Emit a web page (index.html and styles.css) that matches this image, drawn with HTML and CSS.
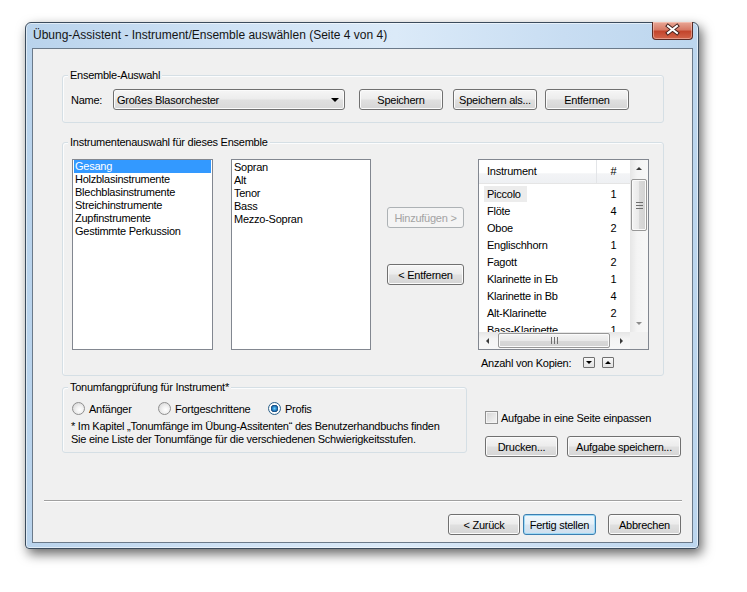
FILE: index.html
```html
<!DOCTYPE html>
<html lang="de">

<head>
    <meta charset="UTF-8">
    <meta name="viewport" content="width=device-width, initial-scale=1.0">
    <title>Übung-Assistent</title>
    <link rel="stylesheet" href="styles.css">
</head>

<body>

    <div class="window">
        <div class="titlebar">
            <span class="title">Übung-Assistent - Instrument/Ensemble auswählen (Seite 4 von 4)</span>
            <div class="close">
                <svg width="41" height="18" viewBox="0 0 41 18">
                    <path d="M16 5 L25 12 M25 5 L16 12" stroke="#43201c" stroke-width="4" stroke-linecap="square" fill="none" />
                    <path d="M16 5 L25 12 M25 5 L16 12" stroke="#ffffff" stroke-width="2" stroke-linecap="square" fill="none" />
                </svg>
            </div>
        </div>

        <div class="client">
            <div class="content">
                <!-- Ensemble -->
                <div class="group group-ensemble">
                    <span class="group-title">Ensemble-Auswahl</span>
                    <div class="ens-row">
                        <span class="name-label">Name:</span>
                        <div class="combo">
                            <span>Großes Blasorchester</span>
                            <i class="tri-down"></i>
                        </div>
                        <button class="btn btn-ens">Speichern</button>
                        <button class="btn btn-ens">Speichern als...</button>
                        <button class="btn btn-ens">Entfernen</button>
                    </div>
                </div>

                <!-- Instruments -->
                <div class="group group-instr">
                    <span class="group-title">Instrumentenauswahl für dieses Ensemble</span>
                    <div class="instr-row">
                        <ul class="listbox lb-families">
                            <li class="selected">Gesang</li>
                            <li>Holzblasinstrumente</li>
                            <li>Blechblasinstrumente</li>
                            <li>Streichinstrumente</li>
                            <li>Zupfinstrumente</li>
                            <li>Gestimmte Perkussion</li>
                        </ul>
                        <ul class="listbox lb-instruments">
                            <li>Sopran</li>
                            <li>Alt</li>
                            <li>Tenor</li>
                            <li>Bass</li>
                            <li>Mezzo-Sopran</li>
                        </ul>
                        <div class="move-col">
                            <button class="btn btn-move" disabled>Hinzufügen &gt;</button>
                            <button class="btn btn-move btn-remove">&lt; Entfernen</button>
                        </div>
                        <div class="lv-col">
                            <div class="listview">
                                <div class="lv-main">
                                    <div class="lv-header">
                                        <span class="col-name">Instrument</span>
                                        <span class="col-count">#</span>
                                    </div>
                                    <div class="lv-row"><span class="col-name"><span class="focus">Piccolo</span></span><span class="col-count">1</span></div>
                                    <div class="lv-row"><span class="col-name">Flöte</span><span class="col-count">4</span></div>
                                    <div class="lv-row"><span class="col-name">Oboe</span><span class="col-count">2</span></div>
                                    <div class="lv-row"><span class="col-name">Englischhorn</span><span class="col-count">1</span></div>
                                    <div class="lv-row"><span class="col-name">Fagott</span><span class="col-count">2</span></div>
                                    <div class="lv-row"><span class="col-name">Klarinette in Eb</span><span class="col-count">1</span></div>
                                    <div class="lv-row"><span class="col-name">Klarinette in Bb</span><span class="col-count">4</span></div>
                                    <div class="lv-row"><span class="col-name">Alt-Klarinette</span><span class="col-count">2</span></div>
                                    <div class="lv-row lv-partial"><span class="col-name">Bass-Klarinette</span><span class="col-count">1</span></div>
                                </div>
                                <div class="vscroll">
                                    <div class="sb-arrow"><i class="tri-up small"></i></div>
                                    <div class="vthumb"><i class="grip-h"></i></div>
                                    <div class="sb-track"></div>
                                    <div class="sb-arrow"><i class="tri-down small light"></i></div>
                                </div>
                                <div class="hscroll">
                                    <div class="sb-arrow"><i class="tri-left"></i></div>
                                    <div class="hthumb"><i class="grip-v"></i></div>
                                    <div class="sb-track"></div>
                                    <div class="sb-arrow"><i class="tri-right"></i></div>
                                </div>
                                <div class="corner"></div>
                            </div>
                            <div class="copies">
                                <span class="copies-label">Anzahl von Kopien:</span>
                                <span class="spin"><i class="tri-down tiny"></i></span>
                                <span class="spin"><i class="tri-up tiny"></i></span>
                            </div>
                        </div>
                    </div>
                </div>

                <!-- Range check + print -->
                <div class="lower">
                    <div class="group group-range">
                        <span class="group-title">Tonumfangprüfung für Instrument*</span>
                        <div class="radio-row">
                            <label class="option opt-1"><span class="radio"></span>Anfänger</label>
                            <label class="option opt-2"><span class="radio"></span>Fortgeschrittene</label>
                            <label class="option"><span class="radio checked"></span>Profis</label>
                        </div>
                        <p class="footnote">* Im Kapitel „Tonumfänge im Übung-Assitenten“ des Benutzerhandbuchs finden<br>Sie eine Liste der Tonumfänge für die verschiedenen Schwierigkeitsstufen.</p>
                    </div>
                    <div class="print-col">
                        <label class="check-row"><span class="checkbox"></span>Aufgabe in eine Seite einpassen</label>
                        <div class="print-buttons">
                            <button class="btn btn-print">Drucken...</button>
                            <button class="btn btn-store">Aufgabe speichern...</button>
                        </div>
                    </div>
                </div>
            </div>

            <div class="separator"></div>

            <div class="nav">
                <button class="btn btn-back">&lt; Zurück</button>
                <button class="btn btn-finish default">Fertig stellen</button>
                <button class="btn btn-cancel">Abbrechen</button>
            </div>
        </div>
    </div>

</body>

</html>
```

FILE: styles.css
```css
/* Vista style wizard dialog */
body {
    margin: 0;
    width: 747px;
    height: 592px;
    overflow: hidden;
    background-color: #ffffff;
    font-family: "Liberation Sans", Arial, sans-serif;
    font-size: 11px;
    letter-spacing: -0.25px;
    color: #000;
}

/* window frame */
.window {
    margin: 22px 0 0 25px;
    width: 674px;
    height: 527px;
    box-sizing: border-box;
    border: 1px solid #3b4b5c;
    border-radius: 6px 6px 4px 4px;
    background: linear-gradient(to right, #b9d3ec 0%, #cfe2f5 30%, #dbeaf8 55%, #c8ddf2 80%, #bcd6ee 100%);
    box-shadow: 3px 5px 12px rgba(0, 0, 0, 0.6), inset 0 0 0 1px rgba(255, 255, 255, 0.55);
    display: flex;
    flex-direction: column;
}

.titlebar {
    height: 25px;
    display: flex;
    align-items: flex-start;
    justify-content: space-between;
    padding-left: 7px;
}

.title {
    padding-top: 5px;
    line-height: 15px;
    font-size: 12px;
    letter-spacing: 0;
    color: #141414;
}

.close {
    width: 41px;
    height: 18px;
    margin: -1px 5px 0 0;
    box-sizing: border-box;
    border: 1px solid #5a2a24;
    border-top: none;
    border-radius: 0 0 4px 4px;
    background: linear-gradient(#e8a796 0%, #d77a66 45%, #c3452c 55%, #d2644a 100%);
    box-shadow: inset 0 0 0 1px rgba(255, 220, 210, 0.45);
}

.close svg {
    display: block;
    margin: -1px 0 0 -1px;
}

.client {
    flex: 1;
    margin: 0 5px 5px 6px;
    border: 1px solid #6b7a8a;
    background-color: #f0f0f0;
    display: flex;
    flex-direction: column;
}

.content {
    padding: 26px 0 0 29px;
}

/* group boxes */
.group {
    position: relative;
    box-sizing: border-box;
    border: 1px solid #d5dfe5;
    border-radius: 3px;
    box-shadow: inset 1px 1px 0 #fbfcfd;
}

.group-title {
    position: absolute;
    top: -7px;
    left: 5px;
    padding: 0 2px;
    line-height: 13px;
    background-color: #f0f0f0;
}

.group-ensemble {
    width: 602px;
    height: 48px;
    padding: 13px 0 0 8px;
}

.ens-row {
    display: flex;
    align-items: center;
    height: 21px;
}

.name-label {
    width: 42px;
}

.combo {
    width: 232px;
    height: 21px;
    margin-right: 14px;
    box-sizing: border-box;
    border: 1px solid #707070;
    border-radius: 3px;
    background: linear-gradient(#f6f6f6 0%, #ececec 48%, #e0e0e0 52%, #d8d8d8 100%);
    box-shadow: inset 0 0 0 1px #fbfbfb;
    display: flex;
    align-items: center;
    justify-content: space-between;
    padding: 0 5px 0 3px;
}

/* buttons */
.btn {
    box-sizing: border-box;
    height: 21px;
    padding: 0;
    border: 1px solid #707070;
    border-radius: 3px;
    background: linear-gradient(#f6f6f6 0%, #ececec 48%, #e0e0e0 52%, #d5d5d5 100%);
    box-shadow: inset 0 0 0 1px #fbfbfb;
    font-family: "Liberation Sans", Arial, sans-serif;
    font-size: 11px;
    letter-spacing: -0.25px;
    color: #000;
}

.btn:disabled {
    border-color: #adb2b5;
    background: #f4f4f4;
    box-shadow: none;
    color: #a3a3a3;
}

.btn.default {
    border-color: #3c7fb1;
    background: linear-gradient(#f2f8fc 0%, #e6f0f8 48%, #d8e6f2 52%, #cfdfee 100%);
    box-shadow: inset 0 0 0 1px #9fdaf6;
}

.btn-ens {
    width: 84px;
    margin-right: 10px;
}

.btn-ens:last-child {
    margin-left: -2px;
}

/* instrument selection */
.group-instr {
    width: 602px;
    height: 234px;
    margin-top: 19px;
    padding: 16px 0 0 9px;
}

.instr-row {
    display: flex;
    align-items: flex-start;
}

.listbox {
    list-style-type: none;
    margin: 0;
    padding: 0;
    height: 191px;
    box-sizing: border-box;
    border: 1px solid #828790;
    background-color: #fff;
}

.listbox li {
    line-height: 13px;
    padding-left: 2px;
    white-space: nowrap;
}

.listbox li:first-child {
    margin-top: 1px;
}

.listbox li.selected {
    margin: 0 1px;
    padding-left: 1px;
    background-color: #3399ff;
    color: #fff;
}

.lb-families {
    width: 141px;
    margin-right: 18px;
}

.lb-instruments {
    width: 140px;
    margin-right: 16px;
}

.move-col {
    width: 77px;
    margin-right: 14px;
    padding-top: 48px;
    display: flex;
    flex-direction: column;
}

.btn-remove {
    margin-top: 36px;
}

.lv-col {
    width: 171px;
}

.listview {
    height: 191px;
    box-sizing: border-box;
    border: 1px solid #828790;
    background-color: #fff;
    display: grid;
    grid-template-columns: 151px 18px;
    grid-template-rows: 172px 17px;
}

.lv-main {
    overflow: hidden;
}

.lv-header {
    display: flex;
    height: 24px;
    box-sizing: border-box;
    border-bottom: 1px solid #e5e5e5;
    background: linear-gradient(#ffffff 0%, #ffffff 55%, #f3f4f6 60%, #eef0f3 100%);
    line-height: 23px;
}

.lv-header .col-name {
    width: 118px;
    box-sizing: border-box;
    padding-left: 8px;
    border-right: 1px solid #e3e5e8;
}

.lv-header .col-count {
    width: 33px;
    text-align: center;
}

.lv-row {
    display: flex;
    height: 17px;
    line-height: 17px;
}

.lv-row:nth-child(2) {
    margin-top: 2px;
}

.lv-partial {
    height: 12px;
    overflow: hidden;
}

.lv-row .col-name {
    width: 118px;
    box-sizing: border-box;
    padding-left: 8px;
    white-space: nowrap;
}

.lv-row .col-count {
    width: 33px;
    text-align: center;
}

.focus {
    display: inline-block;
    margin-left: -3px;
    padding: 0 6px 0 3px;
    line-height: 16px;
    background-color: #ececec;
}

/* scrollbars */
.vscroll {
    display: flex;
    flex-direction: column;
    background: linear-gradient(to right, #e6e6e6, #f4f4f4 40%, #f7f7f7);
}

.hscroll {
    display: flex;
    background: linear-gradient(#e6e6e6, #f4f4f4 40%, #f7f7f7);
}

.sb-arrow {
    flex: 0 0 17px;
    display: flex;
    align-items: center;
    justify-content: center;
}

.sb-track {
    flex: 1;
}

.vthumb {
    height: 52px;
    margin: 2px 1px 0;
    box-sizing: border-box;
    border: 1px solid #979797;
    border-radius: 2px;
    background: linear-gradient(to right, #f4f4f4, #e9e9e9 50%, #d9d9d9 51%, #d2d2d2);
    box-shadow: inset 0 0 0 1px #fafafa;
    display: flex;
    align-items: center;
    justify-content: center;
}

.hthumb {
    width: 112px;
    margin: 1px 0 1px 2px;
    box-sizing: border-box;
    border: 1px solid #979797;
    border-radius: 2px;
    background: linear-gradient(#f4f4f4, #e9e9e9 50%, #d9d9d9 51%, #d2d2d2);
    box-shadow: inset 0 0 0 1px #fafafa;
    display: flex;
    align-items: center;
    justify-content: center;
}

.grip-h {
    width: 7px;
    height: 5px;
    border-top: 1px solid #6f6f6f;
    border-bottom: 1px solid #6f6f6f;
    background: linear-gradient(transparent 2px, #6f6f6f 2px, #6f6f6f 3px, transparent 3px);
}

.grip-v {
    width: 5px;
    height: 7px;
    border-left: 1px solid #6f6f6f;
    border-right: 1px solid #6f6f6f;
    background: linear-gradient(to right, transparent 2px, #6f6f6f 2px, #6f6f6f 3px, transparent 3px);
}

.corner {
    background-color: #f0f0f0;
}

/* arrow glyphs */
.tri-down,
.tri-up {
    width: 0;
    height: 0;
    border-left: 4px solid transparent;
    border-right: 4px solid transparent;
}

.tri-down {
    border-top: 4px solid #000;
}

.tri-up {
    border-bottom: 4px solid #000;
}

.tri-up.small {
    border-left-width: 3px;
    border-right-width: 3px;
    border-bottom: 3px solid #3a3a3a;
}

.tri-down.small {
    border-left-width: 3px;
    border-right-width: 3px;
    border-top: 3px solid #3a3a3a;
}

.tri-down.light {
    border-top-color: #8c8c8c;
}

.tri-left,
.tri-right {
    width: 0;
    height: 0;
    border-top: 3px solid transparent;
    border-bottom: 3px solid transparent;
}

.tri-left {
    border-right: 3px solid #3a3a3a;
}

.tri-right {
    border-left: 3px solid #3a3a3a;
}

.tri-down.tiny,
.tri-up.tiny {
    border-left-width: 3px;
    border-right-width: 3px;
}

.tri-down.tiny {
    border-top-width: 3px;
}

.tri-up.tiny {
    border-bottom-width: 3px;
}

.copies {
    display: flex;
    align-items: center;
    height: 13px;
    margin-top: 6px;
    padding-left: 3px;
}

.copies-label {
    width: 102px;
}

.spin {
    width: 12px;
    height: 11px;
    margin-right: 7px;
    box-sizing: border-box;
    border: 1px solid #707070;
    border-radius: 1px;
    background: linear-gradient(#f8f8f8, #e3e3e3);
    display: flex;
    align-items: center;
    justify-content: center;
}

/* range check */
.lower {
    display: flex;
    margin-top: 11px;
}

.group-range {
    width: 405px;
    height: 66px;
    padding: 14px 0 0 9px;
}

.radio-row {
    display: flex;
    height: 13px;
    align-items: center;
}

.option {
    display: flex;
    align-items: center;
}

.opt-1 {
    width: 86px;
}

.opt-2 {
    width: 110px;
}

.radio {
    width: 13px;
    height: 13px;
    margin-right: 4px;
    box-sizing: border-box;
    border: 1px solid #8f8f8f;
    border-radius: 50%;
    background: radial-gradient(circle at 60% 60%, #ffffff 0, #f2f2f2 35%, #d0d0d0 100%);
}

.radio.checked {
    border-color: #2c628b;
    background: radial-gradient(circle at 50% 50%, #6fd0fa 0, #2a86c8 2px, #14457a 3.5px, #ffffff 4px, #e6e6e6 100%);
}

.footnote {
    margin: 5px 0 0 -1px;
    line-height: 13px;
}

.print-col {
    margin-left: 18px;
    padding-top: 24px;
}

.check-row {
    display: flex;
    align-items: center;
    height: 13px;
}

.checkbox {
    width: 13px;
    height: 13px;
    margin-right: 3px;
    box-sizing: border-box;
    border: 1px solid #8f8f8f;
    background: linear-gradient(135deg, #d4d4d4, #f6f6f6);
    box-shadow: inset 0 0 0 1px #f4f4f4;
}

.print-buttons {
    display: flex;
    margin-top: 12px;
}

.btn-print {
    width: 73px;
    margin-right: 9px;
}

.btn-store {
    width: 114px;
}

/* wizard navigation */
.separator {
    margin: 43px 10px 0 11px;
    border-top: 1px solid #a0a0a0;
    border-bottom: 1px solid #ffffff;
}

.nav {
    display: flex;
    justify-content: flex-end;
    margin-top: 12px;
    padding-right: 11px;
}

.btn-back {
    width: 72px;
    margin-right: 3px;
}

.btn-finish {
    width: 73px;
    margin-right: 12px;
}

.btn-cancel {
    width: 73px;
}
```
